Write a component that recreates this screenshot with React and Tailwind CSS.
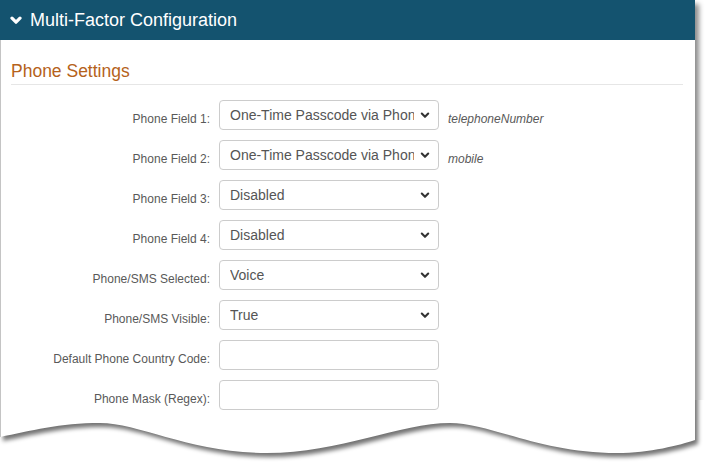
import React from "react";

const rows = [
  { label: "Phone Field 1:", value: "One-Time Passcode via Phone", select: true, help: "telephoneNumber" },
  { label: "Phone Field 2:", value: "One-Time Passcode via Phone", select: true, help: "mobile" },
  { label: "Phone Field 3:", value: "Disabled", select: true },
  { label: "Phone Field 4:", value: "Disabled", select: true },
  { label: "Phone/SMS Selected:", value: "Voice", select: true },
  { label: "Phone/SMS Visible:", value: "True", select: true },
  { label: "Default Phone Country Code:", value: "", select: false },
  { label: "Phone Mask (Regex):", value: "", select: false },
];

function Chevron() {
  return (
    <svg width="10" height="7" viewBox="0 0 10 7" className="shrink-0 ml-auto">
      <polyline points="1.8,1.6 5,4.8 8.2,1.6" fill="none" stroke="#333" strokeWidth="2.1" strokeLinecap="round" strokeLinejoin="round" />
    </svg>
  );
}

const WAVE =
  "M0,-20 L695,-20 L695,40 C680,45 650,53 617,53 C540,53 490,23 450,23 C400,23 340,53 267,53 C190,53 140,23 100,23 C60,23 30,31 0,37 Z";

export default function App() {
  return (
    <div className="relative w-[710px] h-[471px] overflow-hidden bg-white" style={{ fontFamily: '"Liberation Sans", Arial, sans-serif' }}>
      <div className="w-[695px] bg-white shadow-[4px_4px_5px_rgba(0,0,0,0.45)]">
        <div className="h-[40px] bg-[#14536f] flex items-center pl-[10px]">
          <svg width="12" height="9" viewBox="0 0 12 9" className="mr-[8px]">
            <polyline points="2,2.2 6,6.2 10,2.2" fill="none" stroke="#fff" strokeWidth="3.2" strokeLinecap="round" strokeLinejoin="round" />
          </svg>
          <span className="text-white text-[18px] leading-[22px]">Multi-Factor Configuration</span>
        </div>
        <div className="border-l border-[#c4c4c4] pl-[10px] pr-[12px] pt-[21px] pb-[60px]">
          <div className="text-[17.5px] leading-[20px] text-[#b5621b] pb-[3px] border-b border-[#e6e6e6]">Phone Settings</div>
          <div className="mt-[15px] flex flex-col gap-[10px]">
            {rows.map((r) => (
              <div key={r.label} className="flex items-start">
                <div className="w-[199px] text-right pt-[11px] text-[12px] leading-[16px] text-[#595959]">{r.label}</div>
                <div className="ml-[9px] w-[220px] h-[30px] border border-[#cccccc] rounded-[4px] bg-white flex items-center pl-[10px] pr-[8px]">
                  <div className="w-[184px] overflow-hidden whitespace-nowrap text-[14px] leading-[20px] text-[#555]">{r.value}</div>
                  {r.select && <Chevron />}
                </div>
                {r.help && (
                  <div className="ml-[9px] pt-[11px] text-[12px] leading-[16px] italic text-[#595959]">{r.help}</div>
                )}
              </div>
            ))}
          </div>
        </div>
      </div>
      <svg className="absolute left-0 top-[400px]" width="710" height="71" viewBox="0 0 710 71">
        <defs>
          <clipPath id="outside">
            <path clipRule="evenodd" d={"M-10,-30 H720 V90 H-10 Z " + WAVE} />
          </clipPath>
          <filter id="blur" x="-10%" y="-50%" width="120%" height="200%">
            <feGaussianBlur stdDeviation="2.2" />
          </filter>
        </defs>
        <g clipPath="url(#outside)">
          <rect x="-10" y="-30" width="730" height="120" fill="#fff" />
          <path d={WAVE} transform="translate(3,4)" fill="#000" fillOpacity="0.55" filter="url(#blur)" />
        </g>
      </svg>
    </div>
  );
}
